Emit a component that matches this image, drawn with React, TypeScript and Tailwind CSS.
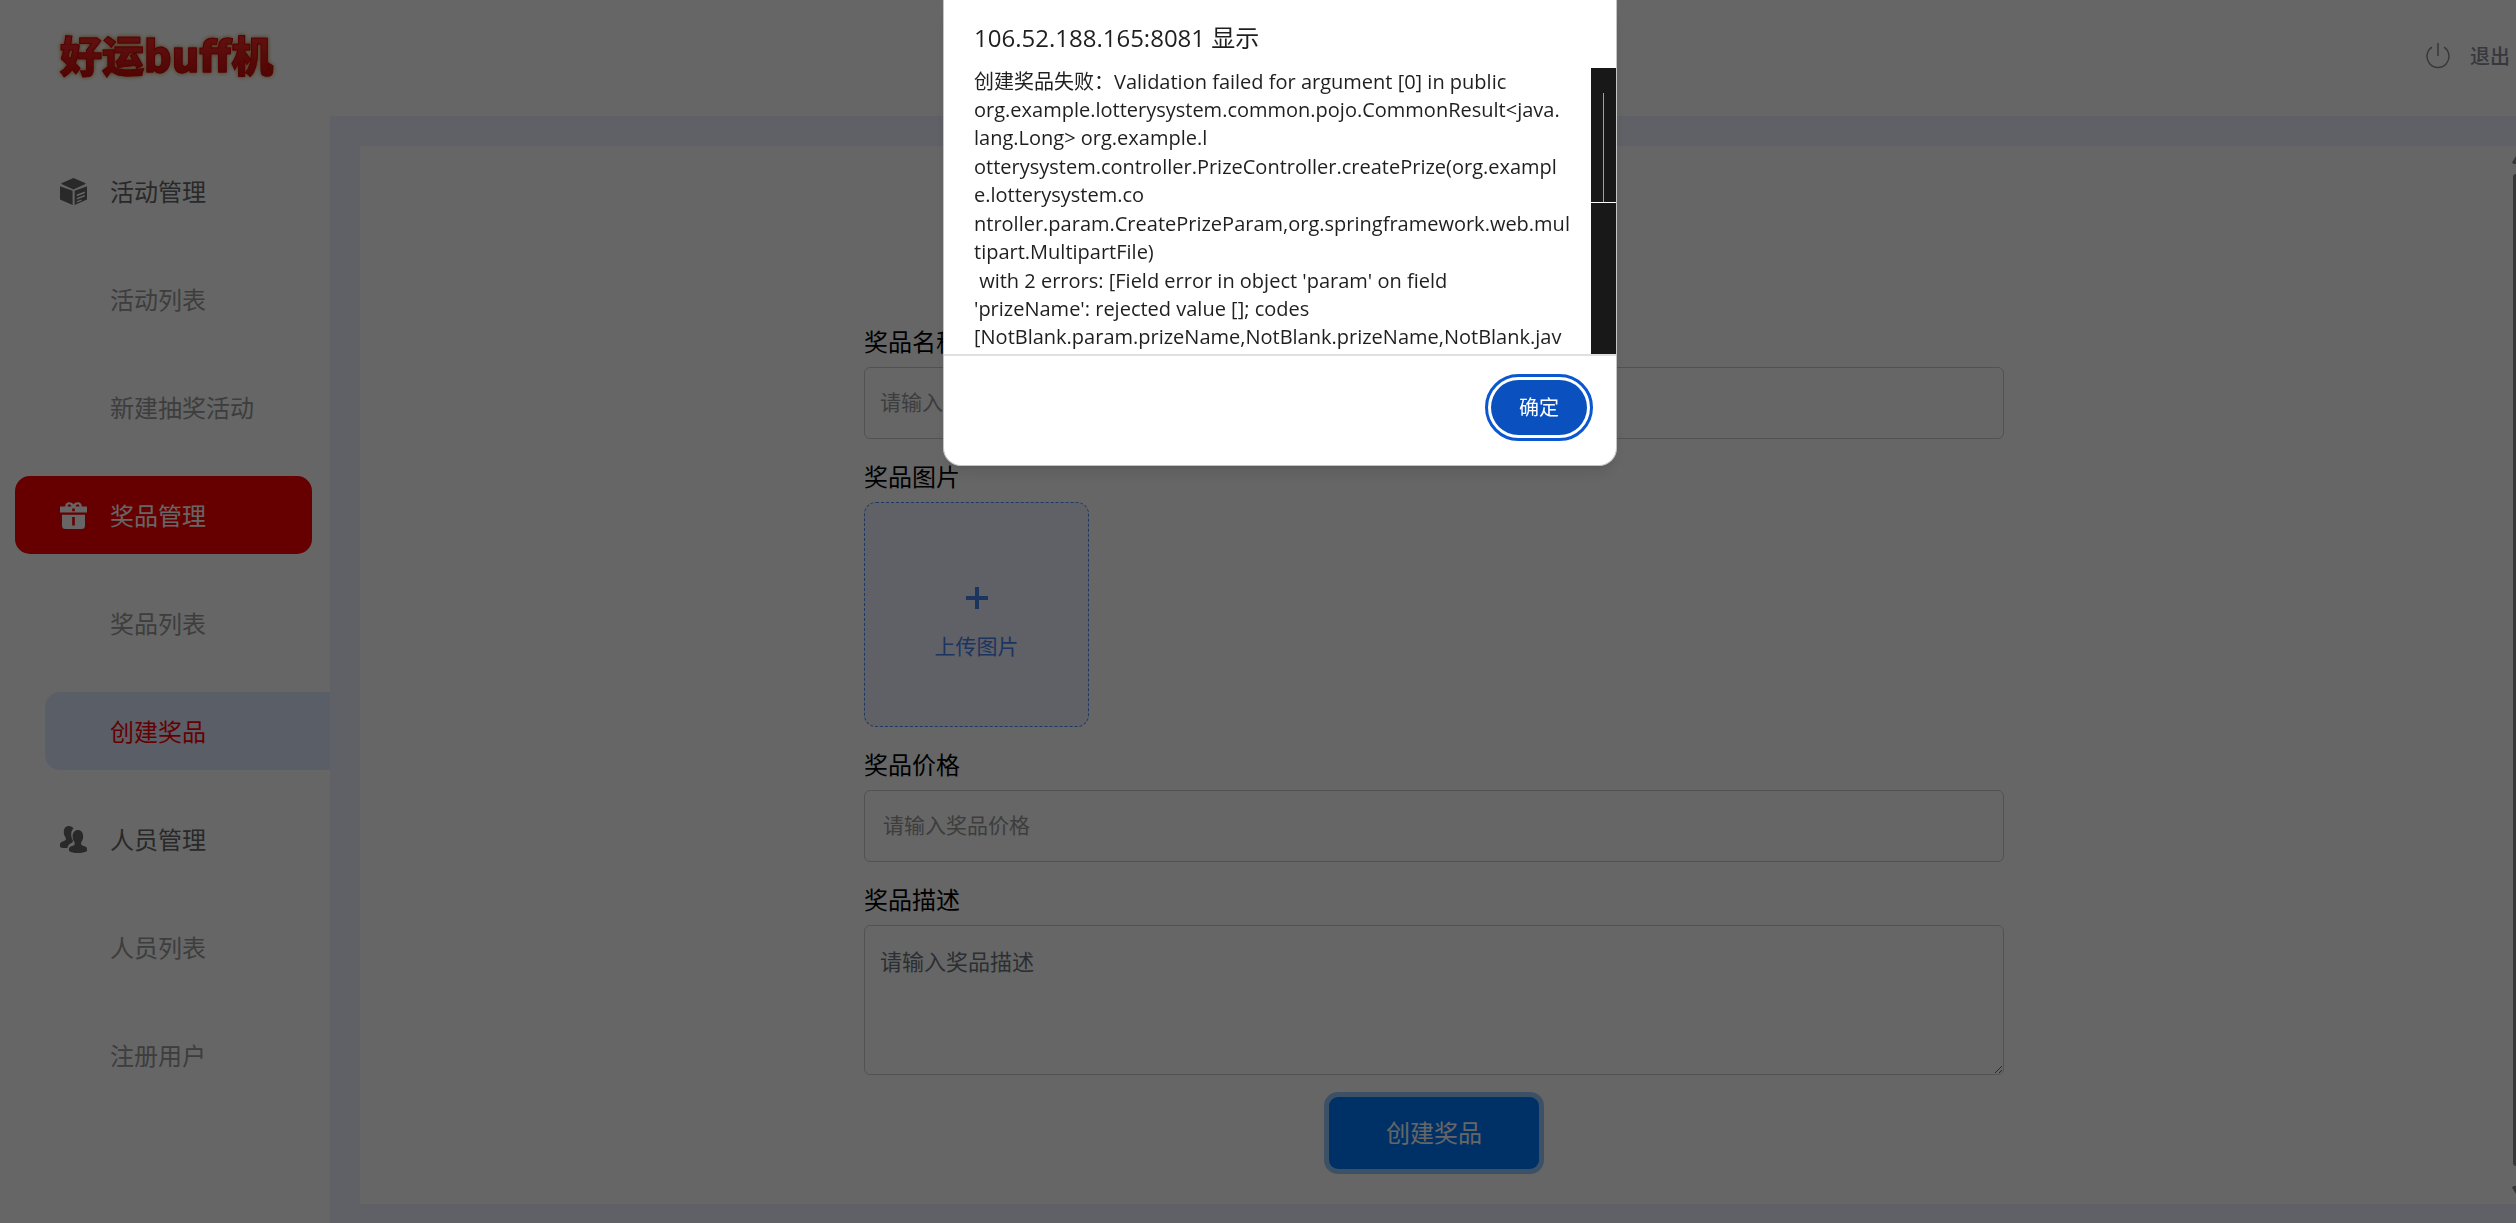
import { useState, FormEvent, ReactNode } from 'react'

type MenuItem = {
  label: string
  icon?: ReactNode
}

const BoxIcon = () => (
  <svg viewBox="0 0 27 27" className="size-[27px]" fill="currentColor" aria-hidden="true">
    <path d="M13.5 0 25.6 5.2v.9L13.5 11.6 1.4 6.1v-.9z" />
    <path d="M0 8.2 12.6 12.8V27L0 21.6z" />
    <path
      fillRule="evenodd"
      d="M14.6 12.8 27 8.2v13.4L14.6 27zM16.800 16.600v1.600l8-3v-1.600zM16.800 20v1.600l8-3v-1.600zM16.800 23.200v1.400l4.600-1.800v-1.400z"
    />
  </svg>
)

const GiftIcon = () => (
  <svg viewBox="0 0 27 27" className="size-[27px]" fill="currentColor" aria-hidden="true">
    <path
      fillRule="evenodd"
      d="M0 4.6h5.2C5.2 2 6.6.2 9 .2c2 0 3.6.9 4.5 2.3C14.4 1.1 16 .2 18 .2c2.4 0 3.8 1.8 3.8 4.4H27v6H0zM7.600 4.600h3.800C11 3.100 10.200 2.300 9.200 2.300c-1 0-1.600.9-1.600 2.300zm8 0h3.800c0-1.400-.6-2.300-1.600-2.300s-1.800.8-2.200 2.300zM12.200 6.500v2.700h2.600V6.500z"
    />
    <path
      fillRule="evenodd"
      d="M2 12.800h23V23.500a3.500 3.500 0 0 1-3.500 3.500h-16A3.500 3.500 0 0 1 2 23.500zM12.200 15v8.600h2.600V15z"
    />
  </svg>
)

const UsersIcon = () => (
  <svg viewBox="0 0 27 27" className="size-[27px]" fill="currentColor" aria-hidden="true">
    <path d="M8.800 0c2.200 0 3.900.9 4.700 2.500-1.800 1.600-2.500 4-2.300 6.600.1 2 .7 3.800 1.700 5.100.2 1.600-.3 2.400-2 3-1.900.7-3 2.300-3.300 4.600C4.500 22.400 1.400 22 0 21v-2.500c0-1.600.7-2.300 2.300-2.800 1.700-.5 3.100-1 3.500-1.900.3-.9.1-1.800-.5-2.700-1-1.400-1.500-3-1.500-5C3.800 2.300 5.800 0 8.800 0z" />
    <path d="M17.900 4c3.100 0 5.300 2.500 5.300 6.300 0 2.100-.6 4-1.600 5.400-.6.9-.7 2-.3 2.800.4.8 1.700 1.300 3.400 1.800 1.700.5 2.300 1.300 2.300 3V25c-2.300 1.400-5.500 2-9.100 2s-6.700-.6-8.900-2v-1.700c0-1.700.7-2.500 2.300-3 1.700-.5 2.900-1 3.300-1.800.4-.8.2-1.900-.4-2.800-1-1.400-1.600-3.300-1.600-5.400C12.600 6.500 14.800 4 17.900 4z" />
  </svg>
)

const PowerIcon = () => (
  <svg
    viewBox="0 0 24 26"
    className="h-[26px] w-6"
    fill="none"
    stroke="currentColor"
    strokeWidth="1.5"
    aria-hidden="true"
  >
    <path d="M12 0v13" />
    <path d="M6 4.200a11 11 0 1 0 12 0" />
  </svg>
)

const menu: MenuItem[] = [
  { label: '活动管理', icon: <BoxIcon /> },
  { label: '活动列表' },
  { label: '新建抽奖活动' },
  { label: '奖品管理', icon: <GiftIcon /> },
  { label: '奖品列表' },
  { label: '创建奖品' },
  { label: '人员管理', icon: <UsersIcon /> },
  { label: '人员列表' },
  { label: '注册用户' },
]

const errorLines = [
  [
    '创建奖品失败：Validation failed for argument [0] in public',
    'org.example.lotterysystem.common.pojo.CommonResult<java.',
    'lang.Long> org.example.l',
  ],
  [
    'otterysystem.controller.PrizeController.createPrize(org.exampl',
    'e.lotterysystem.co',
  ],
  [
    'ntroller.param.CreatePrizeParam,org.springframework.web.mul',
    'tipart.MultipartFile)',
  ],
  [
    " with 2 errors: [Field error in object 'param' on field",
    "'prizeName': rejected value []; codes",
    '[NotBlank.param.prizeName,NotBlank.prizeName,NotBlank.jav',
  ],
]

function Header() {
  return (
    <header className="flex h-[116px] shrink-0 items-center justify-between bg-white pr-[6px] pb-1 pl-[60px]">
      <h1 className="bg-linear-to-b from-[#ff3030] to-[#c00000] bg-clip-text pb-1 font-['Noto_Sans_CJK_SC',sans-serif] text-[42px] leading-[56px] font-black text-transparent drop-shadow-[0_0_2px_#c08020] [-webkit-text-stroke:1px_#d00808]">
        好运buff机
      </h1>
      <a href="#logout" className="flex items-center gap-5 text-[20px] font-medium text-[#8c8c96]">
        <PowerIcon />
        退出
      </a>
    </header>
  )
}

function Sidebar({ active, parent }: { active: string; parent: string }) {
  const itemClass = (item: MenuItem) => {
    if (item.label === parent) return 'mr-[18px] ml-[15px] rounded-[15px] bg-[#ff0000] pl-[45px] text-white'
    if (item.label === active) return 'ml-[45px] rounded-l-[15px] bg-[#e1ebff] pl-[65px] text-[#ff0000]'
    if (item.icon) return 'pl-[60px] text-[#666666]'
    return 'pl-[110px] text-[#999999]'
  }

  return (
    <nav className="flex w-[330px] shrink-0 flex-col gap-[30px] bg-white pt-9">
      {menu.map((item) => (
        <a
          key={item.label}
          href={`#${item.label}`}
          className={`flex h-[78px] items-center gap-[23px] text-[24px] ${itemClass(item)}`}
        >
          {item.icon}
          {item.label}
        </a>
      ))}
    </nav>
  )
}

function PrizeForm() {
  const [name, setName] = useState<string>('')
  const [price, setPrice] = useState<string>('')
  const [description, setDescription] = useState<string>('')

  const handleSubmit = (e: FormEvent<HTMLFormElement>) => {
    e.preventDefault()
  }

  return (
    <form onSubmit={handleSubmit} className="flex w-full max-w-[1140px] flex-col gap-5">
      <div className="flex flex-col gap-[9px]">
        <label htmlFor="prizeName" className="text-[24px] leading-[34px] text-black">
          奖品名称
        </label>
        <input
          id="prizeName"
          type="text"
          value={name}
          onChange={(e) => setName(e.target.value)}
          placeholder="请输入奖品名称"
          className="h-[72px] rounded-md border border-[#cccccc] px-[15px] pb-1 text-[21px] placeholder:text-[#999999] focus:outline-none"
        />
      </div>
      <div className="flex flex-col items-start gap-[9px]">
        <span className="text-[24px] leading-[34px] text-black">奖品图片</span>
        <button
          type="button"
          className="flex size-[225px] flex-col items-center justify-center gap-5 rounded-xl border border-dashed border-[#4c8dff] bg-[#f0f2ff] text-[21px] leading-8 text-[#4584ee]"
        >
          <svg viewBox="0 0 22 22" className="mt-[18px] size-[22px]" fill="currentColor" aria-hidden="true">
            <path d="M9 0h4v9h9v4h-9v9H9v-9H0V9h9z" />
          </svg>
          上传图片
        </button>
      </div>
      <div className="flex flex-col gap-[9px]">
        <label htmlFor="price" className="text-[24px] leading-[34px] text-black">
          奖品价格
        </label>
        <input
          id="price"
          type="text"
          value={price}
          onChange={(e) => setPrice(e.target.value)}
          placeholder="请输入奖品价格"
          className="h-[72px] rounded-md border border-[#cccccc] px-[18px] pb-1 text-[21px] placeholder:text-[#999999] focus:outline-none"
        />
      </div>
      <div className="flex flex-col gap-[9px]">
        <label htmlFor="description" className="text-[24px] leading-[34px] text-black">
          奖品描述
        </label>
        <textarea
          id="description"
          value={description}
          onChange={(e) => setDescription(e.target.value)}
          placeholder="请输入奖品描述"
          className="h-[150px] resize-y rounded-md border border-[#cccccc] px-[15px] py-[18px] text-[22px] leading-8 placeholder:text-[#6c757d] focus:outline-none"
        />
      </div>
      <button
        type="submit"
        className="mt-0.5 h-[72px] w-[210px] self-center rounded-[9px] bg-[#007bff] pb-0.5 text-[24px] text-white ring-[5px] ring-[#99caff]"
      >
        创建奖品
      </button>
    </form>
  )
}

function ErrorDialog() {
  return (
    <div
      role="alertdialog"
      aria-labelledby="dialog-title"
      className="flex w-[674px] flex-col overflow-hidden rounded-b-[18px] border border-t-0 border-[#c4c4c4] bg-white font-['Open_Sans','Noto_Sans_CJK_SC',sans-serif] text-[#1f1f1f] shadow-lg"
    >
      <h2 id="dialog-title" className="px-[30px] pt-[21px] pb-[13px] text-[24px] leading-[34px]">
        106.52.188.165:8081 显示
      </h2>
      <div className="flex h-[288px] justify-between border-b-2 border-[#e0e0e0] pl-[30px]">
        <div className="flex flex-col gap-px text-[20px] leading-7 whitespace-pre">
          {errorLines.map((lines) => (
            <p key={lines[0]}>{lines.join('\n')}</p>
          ))}
        </div>
        {/* scrollbar */}
        <div className="w-[25px] bg-[#181818] pt-[25px]">
          <div className="flex h-[110px] justify-center border-b border-white">
            <div className="w-px bg-[#a0a0a0]" />
          </div>
        </div>
      </div>
      <div className="flex justify-end pt-6 pr-[29px] pb-[30px]">
        <button
          type="button"
          className="h-[55px] w-24 rounded-full bg-[#0b50bf] text-[20px] text-white outline-[3px] outline-offset-[3px] outline-[#0b57d0]"
        >
          确定
        </button>
      </div>
    </div>
  )
}

export default function App() {
  return (
    <div className="flex min-h-screen flex-col bg-white font-['Noto_Sans_CJK_SC',sans-serif]">
      <Header />
      <div className="flex flex-1">
        <Sidebar active="创建奖品" parent="奖品管理" />
        <div className="flex flex-1 flex-col bg-[#f0f2ff] pt-[30px] pb-[19px] pl-[30px]">
          <main className="flex flex-1 bg-white">
            <div className="flex flex-1 justify-center px-10 pt-[178px] pb-[34px]">
              <PrizeForm />
            </div>
            <div className="flex w-2 flex-col items-end overflow-hidden py-2.5 text-[#8b8b8b]">
              <svg viewBox="0 0 4 8" className="h-2 w-1" fill="currentColor" aria-hidden="true">
                <path d="M4 0v8H1.500L0 6.500z" />
              </svg>
              <div className="mt-2.5 mb-5 w-[3px] flex-1 rounded-l-full bg-current" />
              <svg viewBox="0 0 4 8" className="h-2 w-1" fill="currentColor" aria-hidden="true">
                <path d="M4 8V0H1.500L0 1.500z" />
              </svg>
            </div>
          </main>
        </div>
      </div>
      <div className="fixed inset-0 flex items-start justify-center bg-black/60 pl-[44px]">
        <ErrorDialog />
      </div>
    </div>
  )
}
